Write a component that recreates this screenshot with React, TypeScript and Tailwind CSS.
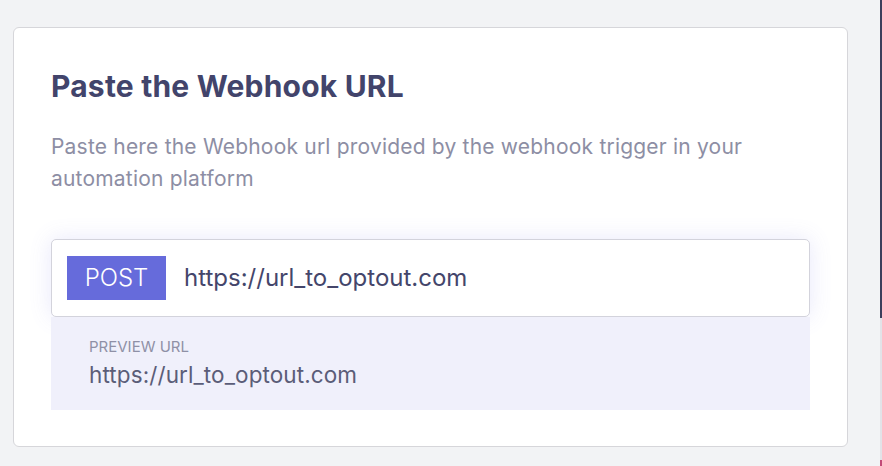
export default function App() {
  return (
    <div className="relative flex h-[466px] w-[882px] bg-[#f2f3f5] font-['Inter',sans-serif]">
      <div className="pl-[13px] pt-[27px]">
        <div className="flex h-[420px] w-[835px] flex-col rounded-md border border-[#d6d6da] bg-white px-[37px] pt-[40px]">
          <h2 className="text-[30px] font-bold leading-[36px] tracking-[0.2px] text-[#42446b]">
            Paste the Webhook URL
          </h2>
          <p className="mt-[27px] text-[21px] leading-[32px] tracking-[0.2px] text-[#8d8ea4]">
            Paste here the Webhook url provided by the webhook trigger in your automation platform
          </p>
          <div className="mt-[44px] flex h-[78px] items-center gap-[18px] rounded-[5px] border border-[#d3d3dc] bg-white px-[15px] shadow-[0_0_22px_rgba(110,112,230,0.16)]">
            <span className="flex h-[44px] w-[99px] items-center justify-center bg-[#666bdb] text-[24px] font-light text-white">
              POST
            </span>
            <span className="text-[24px] text-[#44466b]">https://url_to_optout.com</span>
          </div>
          <div className="flex h-[93px] flex-col bg-[#f0f0fb] px-[38px] pt-[21px]">
            <span className="text-[15px] uppercase leading-[18px] text-[#8f90a6]">Preview URL</span>
            <span className="mt-[6px] text-[22.5px] leading-[26px] tracking-[0.1px] text-[#5b5d78]">
              https://url_to_optout.com
            </span>
          </div>
        </div>
      </div>
      <div className="absolute right-0 top-0 flex h-full w-[2px] flex-col">
        <div className="h-[318px] bg-[#3b3f5c]" />
        <div className="flex-1 bg-[#e2e3e8]" />
        <div className="h-[6px] bg-[#c24a78]" />
      </div>
    </div>
  );
}
